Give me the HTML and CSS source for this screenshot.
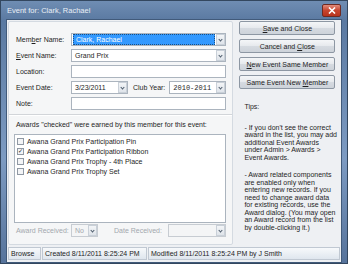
FILE: index.html
```html
<!DOCTYPE html>
<html lang="en">
<head>
  <meta charset="UTF-8" />
  <title>Event for: Clark, Rachael</title>
  <link rel="stylesheet" href="styles.css">
</head>
<body>

  <div class="window">

    <!-- Title bar -->
    <div class="titlebar">
      <div class="caption-text">Event for: Clark, Rachael</div>
      <div class="close">
        <svg width="8" height="7" viewBox="0 0 8 7"><path d="M1 0.5 L7 6.5 M7 0.5 L1 6.5" stroke="#fff" stroke-width="1.6"/></svg>
      </div>
    </div>

    <div class="client">
      <div class="main">

        <!-- Event form -->
        <div class="form">
          <div class="row">
            <label>Mem<u>b</u>er Name:</label>
            <div class="field combo selected"><span class="value">Clark, Rachael</span><span class="arrow"></span></div>
          </div>
          <div class="row">
            <label><u>E</u>vent Name:</label>
            <div class="field combo"><span class="value">Grand Prix</span><span class="arrow"></span></div>
          </div>
          <div class="row">
            <label>Location:</label>
            <div class="field"></div>
          </div>
          <div class="row">
            <label>Event Date:</label>
            <div class="field combo date"><span class="value">3/23/2011</span><span class="arrow"></span></div>
            <label class="inline">Club Year:</label>
            <div class="field combo year"><span class="value mono">2010-2011</span><span class="arrow"></span></div>
          </div>
          <div class="row">
            <label>Note:</label>
            <div class="field"></div>
          </div>

          <hr class="sep">

          <p class="caption">Awards "checked" were earned by this member for this event:</p>
          <div class="list">
            <div class="item"><span class="check"></span>Awana Grand Prix Participation Pin</div>
            <div class="item"><span class="check on">&#10003;</span>Awana Grand Prix Participation Ribbon</div>
            <div class="item"><span class="check"></span>Awana Grand Prix Trophy - 4th Place</div>
            <div class="item"><span class="check"></span>Awana Grand Prix Trophy Set</div>
          </div>

          <div class="row disabled">
            <label>Award Received:</label>
            <div class="field combo small"><span class="value">No</span><span class="arrow"></span></div>
            <label class="inline wide">Date Received:</label>
            <div class="field combo grow"><span class="value"></span><span class="arrow"></span></div>
          </div>
        </div>

        <!-- Buttons and tips -->
        <div class="side">
          <button><u>S</u>ave and Close</button>
          <button>Cancel and <u>C</u>lose</button>
          <button><u>N</u>ew Event Same Member</button>
          <button>Same Event New <u>M</u>ember</button>

          <div class="tips">
            <p class="head">Tips:</p>
            <p>- If you don't see the correct<br>award in the list, you may add<br>additional Event Awards<br>under Admin &gt; Awards &gt;<br>Event Awards.</p>
            <p class="gap">- Award related components<br>are enabled only when<br>entering new records. If you<br>need to change award data<br>for existing records, use the<br>Award dialog. (You may open<br>an Award record from the list<br>by double-clicking it.)</p>
          </div>
        </div>
      </div>

      <!-- Status bar -->
      <div class="status">
        <span class="panel browse">Browse</span>
        <span class="panel created">Created 8/11/2011 8:25:24 PM</span>
        <span class="panel modified">Modified 8/11/2011 8:25:24 PM by J Smith</span>
      </div>
    </div>
  </div>

</body>
</html>
```

FILE: styles.css
```css
body {
  margin: 0;
  padding: 0;
  font-family: "Liberation Sans", Arial, sans-serif;
  font-size: 7px;
  color: #1e1e1e;
}

.window {
  width: 348px;
  height: 264px;
  box-sizing: border-box;
  background: linear-gradient(#6f8db3, #5a79a1 20px, #7d9bc2 60%, #56739b);
  border: 1px solid #33475f;
  padding: 0 5px 5px 5px;
  display: flex;
  flex-direction: column;
}

.titlebar {
  height: 18px;
  display: grid;
  grid-template-columns: 1fr 20px;
  align-items: center;
  flex-shrink: 0;
}

.caption-text {
  justify-self: start;
  color: #e9eff6;
  font-size: 7.5px;
  padding-left: 1px;
}

.close {
  width: 19px;
  height: 13px;
  margin-top: 1px;
  box-sizing: border-box;
  border: 1px solid #6e2a22;
  border-radius: 2px;
  background: linear-gradient(#e08c7c, #c7452f 50%, #b7321d);
  display: flex;
  align-items: center;
  justify-content: center;
}

.client {
  flex: 1;
  background: #eef0f3;
  border: 1px solid #415a7a;
  display: flex;
  flex-direction: column;
}

.main {
  flex: 1;
  display: flex;
  padding: 1px 4px 0 1px;
  gap: 6px;
}

/* form panel */

.form {
  width: 226px;
  box-sizing: border-box;
  border: 1px solid #d4dae1;
  border-radius: 2px;
  background: #f5f6f7;
  padding: 11px 6px 4px 7px;
}

.row {
  display: flex;
  align-items: center;
  height: 13px;
  margin-bottom: 3px;
}

.row label {
  width: 55px;
  flex-shrink: 0;
}

.row label.inline {
  width: auto;
  margin: 0 4px 0 5px;
}

.row label.wide {
  margin: 0 6px 0 16px;
}

.field {
  flex: 1;
  height: 13px;
  box-sizing: border-box;
  border: 1px solid #abb4be;
  background: #fff;
  display: flex;
  align-items: center;
}

.field .value {
  flex: 1;
  padding-left: 3px;
  white-space: nowrap;
  overflow: hidden;
}

.field .mono {
  font-family: "Liberation Mono", monospace;
  font-size: 7px;
}

.field .arrow {
  width: 9px;
  height: 11px;
  box-sizing: border-box;
  border: 1px solid #c9d0d8;
  background: linear-gradient(#f3f5f7, #dfe4ea);
  position: relative;
  flex-shrink: 0;
}

.field .arrow::after {
  content: "";
  position: absolute;
  left: 2px;
  top: 3px;
  width: 2px;
  height: 2px;
  border-right: 1px solid #4d5b6b;
  border-bottom: 1px solid #4d5b6b;
  transform: rotate(45deg);
}

.field.selected .value {
  background: #3399ff;
  color: #fff;
  margin: 1px;
  height: 9px;
  line-height: 9px;
  border: 1px dotted #1a4f85;
  padding-left: 2px;
}

.field.date {
  flex: 0 0 57px;
}

.field.year {
  flex: 1;
}

.field.small {
  flex: 0 0 27px;
}

.field.grow {
  flex: 1;
}

.disabled {
  color: #a3a8ae;
  margin-top: 1px;
}

.disabled .field {
  background: #f4f5f6;
  border-color: #c7ccd2;
}

.sep {
  border: none;
  border-top: 1px solid #d2d5d9;
  border-bottom: 1px solid #fff;
  margin: 4px -6px 5px -7px;
}

.caption {
  margin: 0 0 6px 0;
}

.list {
  height: 89px;
  box-sizing: border-box;
  border: 1px solid #abb4be;
  background: #fff;
  padding: 1px 2px;
  margin-left: -2px;
}

.item {
  height: 10px;
  display: flex;
  align-items: center;
  white-space: nowrap;
}

.check {
  width: 7px;
  height: 7px;
  box-sizing: border-box;
  border: 1px solid #8f98a3;
  background: #f3f4f6;
  margin-right: 3px;
  font-size: 6px;
  line-height: 5px;
  text-align: center;
  color: #222;
}

/* buttons and tips */

.side {
  flex: 1;
  display: flex;
  flex-direction: column;
  gap: 4px;
}

.side button {
  height: 14px;
  width: 96px;
  padding: 0;
  font-family: inherit;
  font-size: 7px;
  color: #1e1e1e;
  border: 1px solid #8d97a3;
  border-radius: 2px;
  background: linear-gradient(#f4f6f8, #e6e9ed 50%, #d6dbe1 51%, #cdd3da);
}

.tips {
  padding: 10px 0 0 5px;
  font-size: 7px;
  line-height: 7.5px;
  white-space: nowrap;
}

.tips p {
  margin: 0;
}

.tips p.head {
  margin-bottom: 13px;
}

.tips p.gap {
  margin-top: 10px;
}

/* status bar */

.status {
  height: 14px;
  display: flex;
  gap: 1px;
  padding: 0 1px 1px 1px;
  margin-top: 2px;
}

.panel {
  box-sizing: border-box;
  height: 13px;
  border: 1px solid #c0c8d2;
  background: linear-gradient(#f7f9fb, #dfe6ee);
  padding-left: 2px;
  display: flex;
  align-items: center;
  white-space: nowrap;
}

.browse {
  width: 33px;
}

.created {
  width: 105px;
}

.modified {
  flex: 1;
}
```
